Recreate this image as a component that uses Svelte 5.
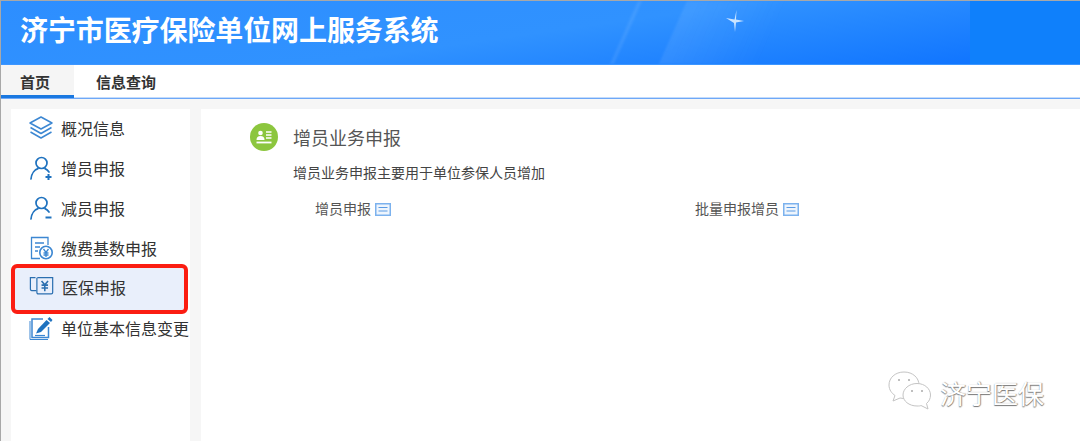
<script>
    const menu = [
        { label: "概况信息", icon: "layers" },
        { label: "增员申报", icon: "add" },
        { label: "减员申报", icon: "minus" },
        { label: "缴费基数申报", icon: "fee" },
        { label: "医保申报", icon: "yen", active: true },
        { label: "单位基本信息变更", icon: "edit" }
    ];
</script>

<div class="page">
    <header class="banner">
        <h1>济宁市医疗保险单位网上服务系统</h1>
        <div class="streak streak-a"></div>
        <div class="streak streak-b"></div>
        <svg class="star" width="24" height="24" viewBox="0 0 24 24">
            <path d="M13.5 1 L13 10.5 L21 12 L13 13.5 L12 23 L11 14 L3 9 L11.5 10.6 Z" fill="#e4f2ff" opacity="0.85"/>
        </svg>
        <div class="banner-end"></div>
    </header>

    <nav class="tabs">
        <div class="tab current">首页</div>
        <div class="tab">信息查询</div>
    </nav>

    <div class="body">
        <aside class="side">
            {#each menu as item}
                <div class="item" class:active={item.active}>
                    <span class="icon">
                        {#if item.icon === "layers"}
                            <svg width="26" height="26" viewBox="0 0 26 26" fill="none" stroke="#3c87d2" stroke-width="1.5" stroke-linejoin="round">
                                <path d="M13 2 L24 8 L13 14 L2 8 Z"/>
                                <path d="M2.5 12.5 L13 18.5 L23.5 12.5"/>
                                <path d="M2.5 17 L13 23 L23.5 17"/>
                            </svg>
                        {:else if item.icon === "add"}
                            <svg width="26" height="26" viewBox="0 0 26 26" fill="none" stroke="#1f72bf" stroke-width="1.7" stroke-linecap="round">
                                <circle cx="13.5" cy="8" r="5.5"/>
                                <path d="M3 24 C3.5 18 7 14.5 10 13.6"/>
                                <path d="M17 13.6 C18.5 14.2 20 15.4 21 17"/>
                                <path d="M17.5 22 H23.5 M20.5 19 V25" stroke-width="2" stroke-linecap="butt"/>
                            </svg>
                        {:else if item.icon === "minus"}
                            <svg width="26" height="26" viewBox="0 0 26 26" fill="none" stroke="#1f72bf" stroke-width="1.7" stroke-linecap="round">
                                <circle cx="13.5" cy="8" r="5.5"/>
                                <path d="M3 24 C3.5 18 7 14.5 10 13.6"/>
                                <path d="M17 13.6 C18.5 14.2 20 15.4 21 17"/>
                                <path d="M17.5 22.5 H23.5" stroke-width="2" stroke-linecap="butt"/>
                            </svg>
                        {:else if item.icon === "fee"}
                            <svg width="26" height="26" viewBox="0 0 26 26" fill="none" stroke="#3c87d2" stroke-width="1.3">
                                <path d="M12 23.5 H3.5 V2.5 H20 V10"/>
                                <path d="M7 8 H16 M7 12 H12 M7 16 H10"/>
                                <circle cx="18" cy="17.5" r="6.2" stroke-width="1.6"/>
                                <path d="M15.5 14 L18 17.5 L20.5 14 M15.5 18 H20.5 M15.5 20 H20.5 M18 17.5 V22"/>
                            </svg>
                        {:else if item.icon === "yen"}
                            <svg width="28" height="26" viewBox="0 0 28 26" fill="none" stroke="#2b6fb0" stroke-width="1.3">
                                <path d="M8 17 H3 Q1.5 17 1.5 15 V3 H7"/>
                                <path d="M9 3 H25.5 V19 Q25.5 20.5 24 20.5 H10 Q8.5 20.5 8.5 19 V3"/>
                                <path d="M13.5 6.5 L17 10.5 L20.5 6.5 M13.5 11 H20.5 M13.5 14 H20.5 M17 10.5 V17.5" stroke-width="1.7"/>
                            </svg>
                        {:else}
                            <svg width="26" height="26" viewBox="0 0 26 26" fill="none" stroke="#3c87d2" stroke-width="1.5">
                                <path d="M20.5 12 V22.5 H4 V4 H15"/>
                                <path d="M2 6 V24.5 H20" stroke-width="1"/>
                                <path d="M8 18.5 L10 14 L18.5 5 L22 8 L13 17 Z" fill="#1f72bf" stroke="none"/>
                                <path d="M19.5 4 L21.5 2 L24.5 5 L23 7 Z" fill="#1f72bf" stroke="none"/>
                                <path d="M7 20.5 H17" stroke-width="1.2"/>
                            </svg>
                        {/if}
                    </span>
                    <span class="label">{item.label}</span>
                </div>
            {/each}
        </aside>

        <main class="content">
            <div class="title-row">
                <span class="badge">
                    <svg width="28" height="28" viewBox="0 0 28 28">
                        <circle cx="14" cy="14" r="14" fill="#8cc63e"/>
                        <circle cx="10.5" cy="10" r="2.3" fill="#fff"/>
                        <path d="M6.5 17 Q6.5 13 10.5 13 Q14.5 13 14.5 17 Z" fill="#fff"/>
                        <path d="M16 9 H21.5 M16 12 H21.5 M16 15 H21.5" stroke="#fff" stroke-width="1.6"/>
                        <path d="M6.5 19.5 H21.5" stroke="#fff" stroke-width="1.8"/>
                    </svg>
                </span>
                <h2>增员业务申报</h2>
            </div>
            <p class="intro">增员业务申报主要用于单位参保人员增加</p>
            <div class="links">
                <div class="link first">
                    <span>增员申报</span>
                    <svg class="doc" width="16" height="13" viewBox="0 0 16 13" fill="none">
                        <rect x="0.75" y="0.75" width="14.5" height="11.5" stroke="#7cb2ee" stroke-width="1.5" fill="#eef5fd"/>
                        <path d="M3.5 4.5 H12.5 M3.5 8 H12.5" stroke="#5b9be4" stroke-width="1.2"/>
                    </svg>
                </div>
                <div class="link">
                    <span>批量申报增员</span>
                    <svg class="doc" width="16" height="13" viewBox="0 0 16 13" fill="none">
                        <rect x="0.75" y="0.75" width="14.5" height="11.5" stroke="#7cb2ee" stroke-width="1.5" fill="#eef5fd"/>
                        <path d="M3.5 4.5 H12.5 M3.5 8 H12.5" stroke="#5b9be4" stroke-width="1.2"/>
                    </svg>
                </div>
            </div>
        </main>
    </div>

    <div class="mark">
        <svg width="44" height="44" viewBox="0 0 44 44" fill="#fff" stroke="#c4c4c4" stroke-width="1">
            <path d="M17 2 C8 2 2 8 2 15 C2 20 5 23.5 8 25.5 L6 31 L13 28 C15 28.5 17 28.5 19 28.5 C30 28.5 32 20 32 15 C32 8 26 2 17 2 Z"/>
            <path d="M30 13.5 C22 13.5 16 19 16 25 C16 31 22 36 30 36 C32 36 33 36 34 35.5 L41 39 L39.5 33.5 C42 31.5 43.5 28.5 43.5 25 C43.5 19 38 13.5 30 13.5 Z"/>
            <circle cx="12" cy="10" r="1" fill="#aaa" stroke="none"/>
            <circle cx="22" cy="10" r="1" fill="#aaa" stroke="none"/>
            <circle cx="25" cy="21" r="1" fill="#aaa" stroke="none"/>
            <circle cx="35" cy="21" r="1" fill="#aaa" stroke="none"/>
        </svg>
        <span>济宁医保</span>
    </div>
</div>

<style>
    :global(body) {
        margin: 0;
        background: #f6f6f6;
    }

    .page {
        position: relative;
        display: flex;
        flex-direction: column;
        width: 1080px;
        height: 441px;
        overflow: hidden;
        box-sizing: border-box;
        border-top: 1px solid #a8a8a8;
        border-left: 1px solid #a8a8a8;
        font-family: "Liberation Sans", "Noto Sans CJK SC", sans-serif;
    }

    .banner {
        position: relative;
        flex: none;
        height: 64px;
        box-sizing: border-box;
        padding-left: 19px;
        overflow: hidden;
        background: linear-gradient(172deg, #2d8eff 0%, #3092ff 50%, #0b70ff 100%);
        border-bottom: 1px solid #3d96ff;
    }

    h1 {
        margin: 0;
        font-size: 28px;
        line-height: 62px;
        font-weight: 700;
        color: #fff;
        letter-spacing: -0.1px;
    }

    .streak {
        position: absolute;
        top: 0;
        bottom: 0;
        transform: skewX(-24deg);
    }

    .streak-a {
        left: 623px;
        width: 4px;
        background: rgba(255, 255, 255, 0.08);
        filter: blur(1px);
    }

    .streak-b {
        left: 672px;
        width: 100px;
        background: linear-gradient(90deg, rgba(255, 255, 255, 0.08), rgba(255, 255, 255, 0));
        filter: blur(1px);
    }

    .star {
        position: absolute;
        left: 722px;
        top: 8px;
    }

    .banner-end {
        position: absolute;
        left: 969px;
        right: 0;
        top: 0;
        bottom: 0;
        background: #0f80fb;
    }

    .tabs {
        display: flex;
        flex: none;
        height: 34px;
        box-sizing: border-box;
        background: #fff;
        border-bottom: 1px solid #6ea8f8;
        box-shadow: inset 0 -1px 0 #c4dcfb;
    }

    .tab {
        box-sizing: border-box;
        font-size: 15px;
        font-weight: 700;
        line-height: 35px;
        color: #333;
    }

    .tab.current {
        width: 73px;
        padding-left: 19px;
        height: 33px;
        background: #f5f5f5;
        border-bottom: 3px solid #1a78e0;
    }

    .tab:not(.current) {
        padding-left: 22px;
    }

    .body {
        display: flex;
        flex: 1;
        gap: 11px;
        padding: 10px 0 0 10px;
        min-height: 0;
    }

    .side {
        flex: none;
        width: 179px;
        background: #fff;
        display: flex;
        flex-direction: column;
    }

    .item {
        display: flex;
        align-items: center;
        height: 40px;
        box-sizing: border-box;
        padding: 0 0 2px 17px;
        font-size: 16px;
        color: #333;
        white-space: nowrap;
    }

    .icon {
        display: flex;
        justify-content: center;
        width: 26px;
        margin-right: 7px;
    }

    .item.active {
        position: relative;
        height: 44px;
        width: 171px;
        margin: -2px 0 -2px 3px;
        padding: 0 0 4px 15px;
        background: #e9effb;
        outline: 4px solid #fb1d12;
        outline-offset: -1px;
        border-radius: 3px;
    }

    .content {
        flex: 1;
        background: #fff;
        padding: 14px 0 0 49px;
    }

    .title-row {
        display: flex;
        align-items: center;
        gap: 15px;
    }

    .badge {
        display: flex;
    }

    h2 {
        margin: 0;
        font-size: 18px;
        font-weight: 400;
        color: #555;
    }

    .intro {
        margin: 12px 0 0 43px;
        font-size: 14px;
        line-height: 20px;
        color: #444;
    }

    .links {
        display: flex;
        margin: 16px 0 0 65px;
    }

    .link {
        display: flex;
        align-items: center;
        gap: 4px;
        font-size: 14px;
        line-height: 20px;
        color: #555;
    }

    .link.first {
        width: 380px;
    }

    .mark {
        position: absolute;
        left: 886px;
        top: 369px;
        display: flex;
        align-items: center;
        gap: 9px;
        font-size: 26px;
        color: #fff;
        text-shadow: 0 1px 1px #777, 1px 0 1px #999;
    }

    .mark span {
        font-weight: 400;
    }
</style>
